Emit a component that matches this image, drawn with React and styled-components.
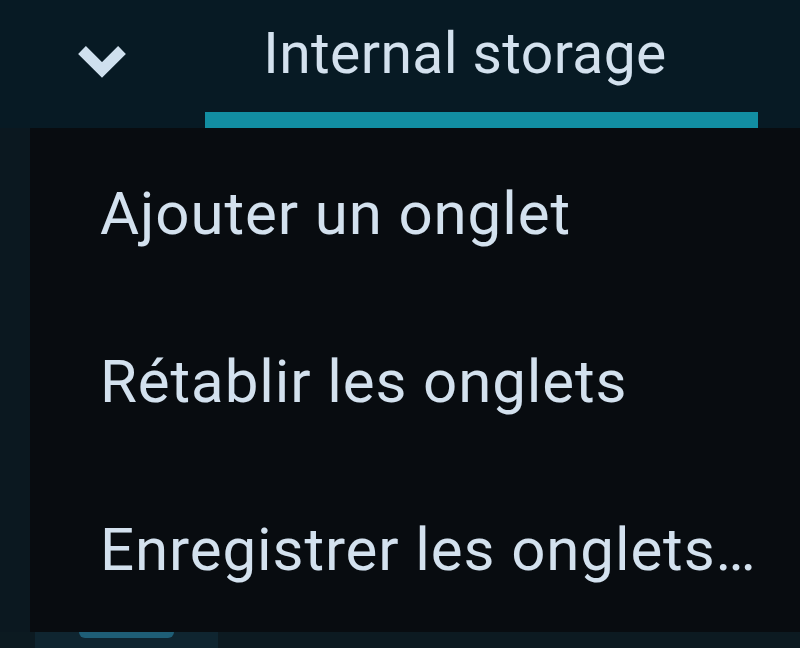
import styled, { createGlobalStyle } from "styled-components";

const Global = createGlobalStyle`
  html, body {
    margin: 0;
    padding: 0;
    background: #0a1820;
  }
  * {
    box-sizing: border-box;
  }
`;

const Screen = styled.div`
  width: 800px;
  height: 648px;
  display: flex;
  flex-direction: column;
  overflow: hidden;
  font-family: Roboto, "Noto Sans", sans-serif;
  color: #d3e1ee;
`;

const TopBar = styled.div`
  height: 128px;
  flex: none;
  display: flex;
  align-items: stretch;
  background: #071a24;
`;

const ChevronButton = styled.div`
  width: 205px;
  display: flex;
  align-items: flex-start;
  padding: 43px 0 0 77px;
  svg {
    display: block;
  }
`;

const Tab = styled.div`
  width: 553px;
  display: flex;
  justify-content: center;
  padding: 19px 33px 0 0;
  font-size: 57px;
  letter-spacing: 0.4px;
  line-height: 70px;
  border-bottom: 16px solid ${(p) => (p.$active ? "#128ea2" : "transparent")};
`;

const Body = styled.div`
  flex: 1;
  position: relative;
  display: flex;
  flex-direction: column;
  justify-content: flex-end;
  background: #0b1820;
`;

const BottomRow = styled.div`
  height: 16px;
  display: flex;
  background: #0c1a21;
`;

const BottomTab = styled.div`
  margin-left: 35px;
  width: 183px;
  background: #0f2530;
  display: flex;
  justify-content: center;
`;

const Pill = styled.div`
  width: 95px;
  height: 6px;
  border-radius: 0 0 8px 8px;
  background: #1e5e76;
`;

const Menu = styled.div`
  position: absolute;
  top: 0;
  left: 30px;
  right: 0;
  height: 504px;
  background: #080c10;
  padding-top: 2px;
`;

const MenuItem = styled.div`
  height: 168px;
  line-height: 168px;
  padding-left: 70px;
  font-size: 60px;
  letter-spacing: 0.9px;
  white-space: nowrap;
  color: #d3e1ee;
`;

const items = ["Ajouter un onglet", "Rétablir les onglets", "Enregistrer les onglets…"];

export default function App() {
  return (
    <Screen>
      <Global />
      <TopBar>
        <ChevronButton>
          <svg width="50" height="35" viewBox="0 0 50 35">
            <path
              d="M5 7 L25 27 L45 7"
              fill="none"
              stroke="#cfe0ee"
              strokeWidth="11"
              strokeLinejoin="miter"
            />
          </svg>
        </ChevronButton>
        <Tab $active>Internal storage</Tab>
      </TopBar>
      <Body>
        <BottomRow>
          <BottomTab>
            <Pill />
          </BottomTab>
        </BottomRow>
        <Menu>
          {items.map((t) => (
            <MenuItem key={t}>{t}</MenuItem>
          ))}
        </Menu>
      </Body>
    </Screen>
  );
}
